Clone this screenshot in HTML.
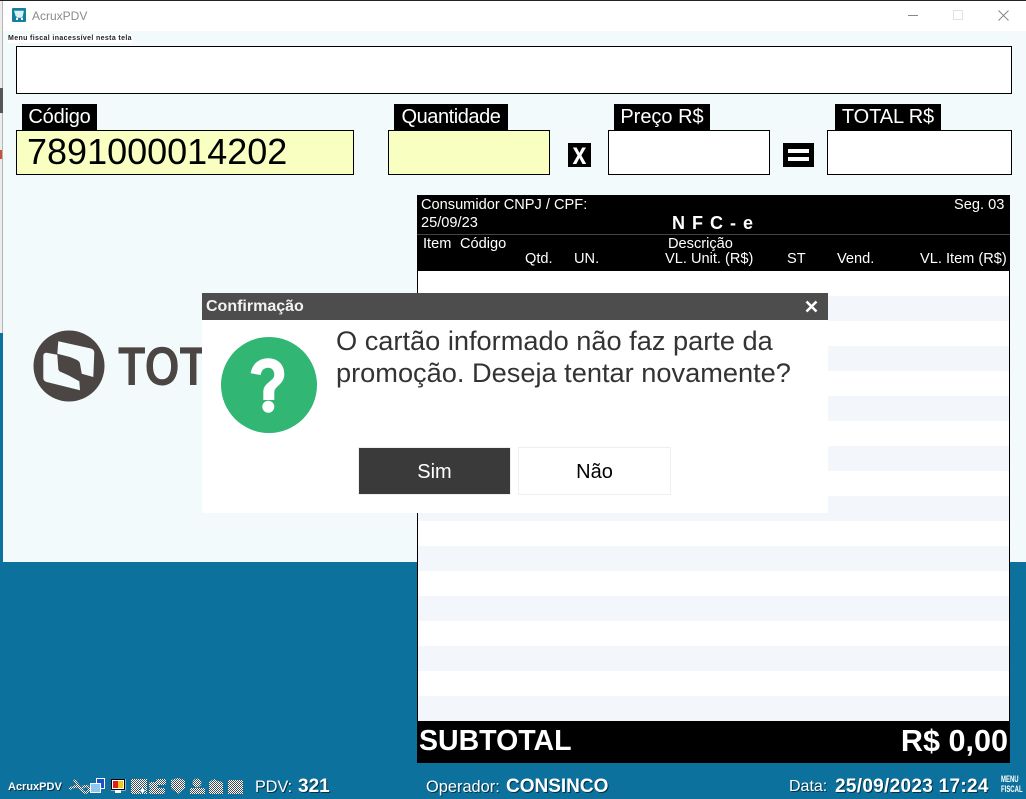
<!DOCTYPE html>
<html lang="pt">
<head>
<meta charset="utf-8">
<title>AcruxPDV</title>
<style>
html,body{margin:0;padding:0;width:1026px;height:799px;overflow:hidden;background:#0c719c}
body{position:relative;font-family:"Liberation Sans",sans-serif}
.a{position:absolute}
.t{position:absolute;white-space:nowrap;line-height:1}
.lab{position:absolute;background:#000;color:#fff;font-size:20px;height:26px;line-height:26px;white-space:nowrap;text-align:center}
.box{position:absolute;border:1px solid #000;box-sizing:border-box;background:#fff}
.y{background:#f8ffc0}
.h{color:#fff;font-size:14.6px;position:absolute;white-space:nowrap;line-height:16px}
.stripe{position:absolute;left:418px;width:591px;height:25px;background:#f3f6fb}
.st{position:absolute;color:#fff;white-space:nowrap;line-height:1;text-shadow:1px 1px 0 #00324a}
</style>
</head>
<body>
<div class="a" style="left:0;top:0;width:1026px;height:1px;background:#222"></div>
<div class="a" style="left:0;top:1px;width:3px;height:332px;background:#ececec"></div>
<div class="a" style="left:2px;top:1px;width:1px;height:332px;background:#b5b5b5"></div>
<div class="a" style="left:0;top:88px;width:3px;height:25px;background:#555"></div>
<div class="a" style="left:0;top:150px;width:2px;height:9px;background:#c8503c"></div>
<div class="a" style="left:3px;top:1px;width:1023px;height:30px;background:#fff"></div>
<div class="a" style="left:3px;top:31px;width:1023px;height:531px;background:#f2fafc"></div>

<svg class="a" style="left:12px;top:8px" width="14" height="14" viewBox="0 0 14 14"><rect width="14" height="14" rx="1" fill="#14809f"/><path d="M3 3.500h8l-.8 4H4.200zM4.500 9h6" stroke="#d8f2f4" stroke-width="1.400" fill="#d8f2f4"/><rect x="4" y="10" width="2" height="2" fill="#fff"/><rect x="9" y="10" width="2" height="2" fill="#fff"/></svg>
<div class="t" style="left:32px;top:10px;font-size:12px;color:#8a8a8a">AcruxPDV</div>
<div class="a" style="left:908px;top:15px;width:10px;height:1px;background:#888"></div>
<div class="a" style="left:953px;top:10px;width:8px;height:8px;border:1px solid #e2e2e2"></div>
<svg class="a" style="left:998px;top:10px" width="11" height="11" viewBox="0 0 11 11"><path d="M.5.5l10 10M10.500.5l-10 10" stroke="#888" stroke-width="1"/></svg>

<div class="t" style="left:8px;top:35px;font-size:7px;line-height:8px;letter-spacing:.36px;font-weight:bold;color:#222;background:#fff">Menu fiscal inacessível nesta tela</div>
<div class="box" style="left:16px;top:46px;width:996px;height:48px"></div>

<div class="lab" style="left:22px;top:104px;width:75px;letter-spacing:-.2px">Código</div>
<div class="box y" style="left:16px;top:130px;width:338px;height:45px"></div>
<div class="t" style="left:27px;top:132px;font-size:36px;line-height:40px;color:#000">7891000014202</div>

<div class="lab" style="left:394px;top:104px;width:114px;letter-spacing:-.45px">Quantidade</div>
<div class="box y" style="left:388px;top:130px;width:162px;height:45px"></div>
<div class="a" style="left:568px;top:143px;width:23px;height:24px;background:#000;color:#fff;font-weight:bold;font-size:25px;line-height:22px;text-align:center"><span style="display:inline-block;transform:scale(1,1.25)">x</span></div>

<div class="lab" style="left:614px;top:104px;width:96px">Preço R$</div>
<div class="box" style="left:608px;top:130px;width:162px;height:45px"></div>
<div class="a" style="left:783px;top:143px;width:31px;height:24px;background:#000"></div>
<div class="a" style="left:788px;top:149px;width:21px;height:3.500px;background:#fff"></div>
<div class="a" style="left:788px;top:157px;width:21px;height:3.500px;background:#fff"></div>

<div class="lab" style="left:835px;top:104px;width:106px;letter-spacing:-.1px">TOTAL R$</div>
<div class="box" style="left:827px;top:130px;width:185px;height:45px"></div>

<svg class="a" style="left:33px;top:330px" width="175" height="74" viewBox="0 0 175 74">
<circle cx="36" cy="36" r="35.500" fill="#4b4543"/>
<path d="M25.300 11.300 L57.500 18.400 Q61.300 19.200 61.300 23 L60.300 47 L48.700 43.700 L47 33.700 Q46.500 31 43 29.500 L37 27 L24.300 23.700 Z" fill="#f2fafc"/>
<path d="M13.700 22.700 L24.300 24.700 L25.300 38.700 Q25.500 41 28 42 L35.300 45.300 L46.300 51.300 L47 60.300 L13.700 52 Q10.300 51 10.300 48 L10.300 26 Q10.300 22.500 13.700 22.700 Z" fill="#f2fafc"/>
<text x="85" y="55" font-family="Liberation Sans,sans-serif" font-weight="bold" font-size="55" fill="#4b4543" textLength="89" lengthAdjust="spacingAndGlyphs">TOT</text>
</svg>

<!-- list -->
<div class="a" style="left:417px;top:195px;width:593px;height:568px;background:#fff;border-left:1px solid #000;border-right:1px solid #000;box-sizing:border-box"></div>
<div class="stripe" style="top:296px"></div><div class="stripe" style="top:346px"></div><div class="stripe" style="top:396px"></div><div class="stripe" style="top:446px"></div><div class="stripe" style="top:496px"></div><div class="stripe" style="top:546px"></div><div class="stripe" style="top:596px"></div><div class="stripe" style="top:646px"></div><div class="stripe" style="top:696px"></div>
<div class="a" style="left:417px;top:195px;width:593px;height:76px;background:#000"></div>
<div class="a" style="left:417px;top:234px;width:593px;height:1px;background:#444"></div>
<div class="h" style="left:421px;top:197px">Consumidor CNPJ / CPF:</div>
<div class="h" style="left:954px;top:197px">Seg. 03</div>
<div class="h" style="left:421px;top:215px">25/09/23</div>
<div class="h" style="left:672px;top:213px;font-size:18px;font-weight:bold;line-height:20px;letter-spacing:1px">N F C - e</div>
<div class="h" style="left:423px;top:236px">Item</div>
<div class="h" style="left:460px;top:236px">Código</div>
<div class="h" style="left:668px;top:236px">Descrição</div>
<div class="h" style="left:525px;top:251px">Qtd.</div>
<div class="h" style="left:574px;top:251px">UN.</div>
<div class="h" style="left:665px;top:251px">VL. Unit. (R$)</div>
<div class="h" style="left:787px;top:251px">ST</div>
<div class="h" style="left:837px;top:251px">Vend.</div>
<div class="h" style="left:920px;top:251px">VL. Item (R$)</div>
<div class="a" style="left:417px;top:721px;width:593px;height:42px;background:#000"></div>
<div class="t" style="left:419px;top:726px;font-size:28.500px;font-weight:bold;color:#fff;line-height:30px">SUBTOTAL</div>
<div class="t" style="right:18px;top:725px;font-size:30.600px;font-weight:bold;color:#fff;line-height:32px">R$ 0,00</div>

<!-- dialog -->
<div class="a" style="left:202px;top:293px;width:626px;height:220px;background:#fff"></div>
<div class="a" style="left:202px;top:293px;width:626px;height:27px;background:#4d4d4d"></div>
<div class="t" style="left:206px;top:298px;font-size:16px;font-weight:bold;color:#f2f2f2;line-height:17px">Confirmação</div>
<svg class="a" style="left:805px;top:300px" width="13" height="13" viewBox="0 0 13 13"><path d="M1.500 1.500l10 10M11.500 1.500l-10 10" stroke="#fff" stroke-width="2.600"/></svg>
<div class="a" style="left:221px;top:337px;width:96px;height:96px;border-radius:50%;background:#31b674"></div>
<svg class="a" style="left:221px;top:337px" width="96" height="96" viewBox="0 0 96 96">
<path d="M29.700 36.300 C31 27 38 21.300 47.300 21.300 C56 21.300 63.300 27 63.300 37 C63.300 44 59 47 56 50 C54 52 53.300 53 53.300 56 V63 H42.300 V55 C42.300 50 45 47.500 48 45 C51 42.500 53.300 41 53.300 38 C53.300 33 50.500 30.700 47.300 30.700 C43 30.700 40.500 33 39.700 38 Z" fill="#fff"/>
<circle cx="47.300" cy="69.700" r="6" fill="#fff"/></svg>
<div class="t" style="left:336px;top:325px;font-size:27.200px;line-height:32px;color:#333;white-space:normal;width:480px">O cartão informado não faz parte da promoção. Deseja tentar novamente?</div>
<div class="a" style="left:358px;top:447px;width:153px;height:48px;box-sizing:border-box;background:#3a3a3a;border:1px solid #eee;color:#fff;font-size:20px;line-height:48px;text-align:center">Sim</div>
<div class="a" style="left:518px;top:447px;width:153px;height:48px;box-sizing:border-box;background:#fff;border:1px solid #eee;color:#000;font-size:20px;line-height:48px;text-align:center">Não</div>

<!-- status bar -->
<div class="st" style="left:8px;top:781px;font-size:11px;font-weight:bold;line-height:13px">AcruxPDV</div>
<svg class="a" style="left:68px;top:777px" width="180" height="18" viewBox="0 0 180 18">
<defs><pattern id="d" width="2" height="2" patternUnits="userSpaceOnUse"><rect width="2" height="2" fill="#3c4d58"/><rect width="1" height="1" fill="#fff"/><rect x="1" y="1" width="1" height="1" fill="#fff"/></pattern></defs>
<path d="M1 12l7-3 6 3a3.500 3.500 0 1 0 5-3l-5 1M6 3l8 10" stroke="url(#d)" stroke-width="2.500" fill="none"/>
<rect x="28.500" y="1.500" width="8" height="10" fill="#1c4fd0" stroke="#fff"/><rect x="22.500" y="6.500" width="10" height="9" fill="#8ec7f0" stroke="#fff"/>
<rect x="43" y="2" width="14.500" height="11.500" fill="#fff"/><rect x="43.500" y="2.500" width="13" height="10" fill="#fff" stroke="#000"/><rect x="45" y="4" width="5" height="7" fill="#d82020"/><rect x="50" y="4" width="5" height="7" fill="#f4c814"/><rect x="47" y="13" width="6" height="3" fill="#fff"/>
<rect x="63" y="2" width="16" height="15" fill="url(#d)"/><rect x="72" y="11" width="5" height="5" fill="#0c719c"/><path d="M74.500 10.500l2.500 3-2.500 3-2.500-3z" fill="#fff"/>
<rect x="88" y="2" width="10" height="6" rx="2" fill="url(#d)"/><rect x="81" y="5" width="9" height="6" rx="2" fill="url(#d)"/><rect x="81" y="11" width="16" height="6" rx="2" fill="url(#d)"/>
<path d="M103 3l7-2 7 2v8l-7 6-7-6z" fill="url(#d)"/>
<circle cx="129" cy="6" r="4.500" fill="url(#d)"/><rect x="122" y="11" width="15" height="6" fill="url(#d)"/>
<path d="M141 5l5-3 4 2 5 1v12h-14z" fill="url(#d)"/>
<rect x="160" y="3" width="15" height="14" fill="url(#d)"/>
</svg>
<div class="st" style="left:255px;top:778px;font-size:16.200px;line-height:18px">PDV:</div>
<div class="st" style="left:298px;top:777px;font-size:19px;font-weight:bold;line-height:20px">321</div>
<div class="st" style="left:426px;top:778px;font-size:16.400px;line-height:18px">Operador:</div>
<div class="st" style="left:506px;top:777px;font-size:19px;font-weight:bold;line-height:20px">CONSINCO</div>
<div class="st" style="left:789px;top:778px;font-size:16px;line-height:18px">Data:</div>
<div class="st" style="left:835px;top:777px;font-size:19px;letter-spacing:.3px;font-weight:bold;line-height:20px">25/09/2023 17:24</div>
<div class="st" style="left:1001px;top:775px;font-size:9.500px;font-weight:bold;line-height:10px;text-shadow:none;transform:scaleX(.63);transform-origin:0 0">MENU<br>FISCAL</div>
</body>
</html>
